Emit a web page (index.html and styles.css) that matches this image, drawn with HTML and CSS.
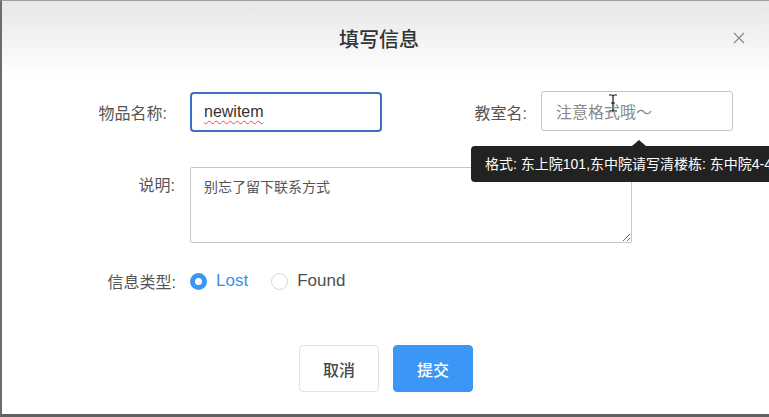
FILE: index.html
```html
<!DOCTYPE html>
<html lang="zh">
<head>
<meta charset="utf-8">
<title>填写信息</title>
<link rel="stylesheet" href="styles.css">
</head>
<body>
<div class="dialog">
  <div class="header">
    <span></span>
    <h1 class="title">填写信息</h1>
    <span class="close">
      <svg width="12" height="12" viewBox="0 0 12 12"><path d="M1 1 L11 11 M11 1 L1 11" stroke="#8c8c8c" stroke-width="1.3" fill="none"/></svg>
    </span>
  </div>
  <div class="form">
    <div class="row row1">
      <label class="lbl lbl-name">物品名称:</label>
      <div class="field focused"><span class="spell">newitem</span></div>
      <label class="lbl lbl-room">教室名:</label>
      <div class="field room"><span class="ph">注意格式哦～</span></div>
    </div>
    <div class="row row2">
      <label class="lbl lbl-desc">说明:</label>
      <textarea class="area" readonly>别忘了留下联系方式</textarea>
    </div>
    <div class="row row3">
      <label class="lbl lbl-type">信息类型:</label>
      <span class="radio checked"></span><span class="opt on">Lost</span>
      <span class="radio"></span><span class="opt">Found</span>
    </div>
    <div class="actions">
      <button class="btn cancel">取消</button>
      <button class="btn submit">提交</button>
    </div>
  </div>
  <div class="tooltip">格式: 东上院101,东中院请写清楼栋: 东中院4-4</div>
  <svg class="ibeam" width="10" height="18" viewBox="0 0 10 18"><path d="M1 1 H4 Q5 1 5 3 V15 Q5 17 4 17 H1 M9 1 H6 Q5 1 5 3 M5 15 Q5 17 6 17 H9" stroke="#fff" stroke-width="3" fill="none"/><path d="M1 1 H4 Q5 1 5 3 V15 Q5 17 4 17 H1 M9 1 H6 Q5 1 5 3 M5 15 Q5 17 6 17 H9 M3 9 H7" stroke="#111" stroke-width="1.2" fill="none"/></svg>
</div>
</body>
</html>
```

FILE: styles.css
```css
html, body {
  margin: 0;
  padding: 0;
  width: 769px;
  height: 417px;
  overflow: hidden;
  background: #fff;
}

.dialog {
  position: relative;
  box-sizing: border-box;
  width: 769px;
  height: 417px;
  border-left: 2px solid #6c6c6c;
  border-top: 1px solid #a0a0a0;
  border-bottom: 3px solid #626262;
  background: #fff;
  font-family: "Liberation Sans", "Noto Sans CJK SC", sans-serif;
  color: #555;
  font-size: 16px;
}

.header {
  height: 74px;
  box-sizing: border-box;
  padding: 0 24px 0 11px;
  display: grid;
  grid-template-columns: 1fr auto 1fr;
  align-items: center;
  background: linear-gradient(#e7e7e7, #fbfbfb 85%, #fff);
}

.title {
  margin: 0;
  font-size: 20px;
  font-weight: 500;
  color: #333;
  font-family: "Noto Sans CJK SC", sans-serif;
}

.close {
  justify-self: end;
  display: flex;
}

.form {
  padding-top: 16px;
}

.row {
  display: flex;
}

.lbl {
  box-sizing: border-box;
  text-align: right;
  color: #555;
  white-space: nowrap;
}

.row1 {
  align-items: center;
  height: 41px;
}

.lbl-name { width: 165px; margin-right: 23px; }
.lbl-room { width: 145px; margin-right: 14px; }

.field {
  box-sizing: border-box;
  width: 192px;
  height: 40px;
  border: 1px solid #c4c4c4;
  border-radius: 3px;
  display: flex;
  align-items: center;
  padding-left: 14px;
  font-size: 16px;
}

.field.focused {
  border: 2px solid #3b70c2;
  border-radius: 4px;
  padding-left: 12px;
  color: #333;
  margin-top: 1px;
}

.field.room { margin-top: -1px; }

.spell {
  text-decoration: underline wavy #e05050;
  text-decoration-thickness: 1px;
  text-underline-offset: 3px;
}

.ph {
  color: #888;
  font-family: "Noto Sans CJK SC", sans-serif;
  font-size: 16px;
}

.row2 {
  margin-top: 35px;
  align-items: flex-start;
}

.lbl-desc {
  width: 173px;
  margin-right: 15px;
  padding-top: 7px;
  line-height: 24px;
}

.area {
  box-sizing: border-box;
  width: 442px;
  height: 76px;
  margin: 0;
  border: 1px solid #c6c6c6;
  border-radius: 2px;
  padding: 8px 13px;
  font-family: "Noto Sans CJK SC", sans-serif;
  font-size: 14px;
  line-height: 20px;
  color: #555;
  resize: both;
  outline: none;
}

.row3 {
  margin-top: 26px;
  align-items: center;
  height: 24px;
}

.lbl-type { width: 174px; margin-right: 14px; }

.radio {
  box-sizing: border-box;
  width: 17px;
  height: 17px;
  border-radius: 50%;
  border: 1px solid #d6d6d6;
  background: #fff;
  margin-right: 9px;
}

.radio.checked {
  border: 5px solid #3d96f4;
  background: #fff;
}

.opt {
  font-size: 17px;
  color: #4f4f4f;
  margin-right: 23px;
}

.opt.on { color: #3d8fe6; }

.actions {
  margin-top: 52px;
  padding-left: 297px;
  display: flex;
  gap: 14px;
}

.btn {
  box-sizing: border-box;
  width: 80px;
  height: 47px;
  border-radius: 4px;
  font-family: "Noto Sans CJK SC", sans-serif;
  font-size: 16px;
  font-weight: 500;
  padding: 0;
}

.cancel {
  background: #fff;
  border: 1px solid #e2e2e2;
  color: #4a4a4a;
}

.submit {
  background: #3b96f6;
  border: 1px solid #3b96f6;
  color: #fff;
}

.tooltip {
  position: absolute;
  left: 469px;
  top: 145px;
  height: 36px;
  line-height: 36px;
  padding: 0 14px;
  background: #222;
  color: #fff;
  border-radius: 4px;
  font-size: 14px;
  white-space: nowrap;
}

.tooltip::before {
  content: "";
  position: absolute;
  left: 161px;
  top: -6px;
  border-left: 7px solid transparent;
  border-right: 7px solid transparent;
  border-bottom: 6px solid #222;
}

.ibeam {
  position: absolute;
  left: 606px;
  top: 93px;
}
```
